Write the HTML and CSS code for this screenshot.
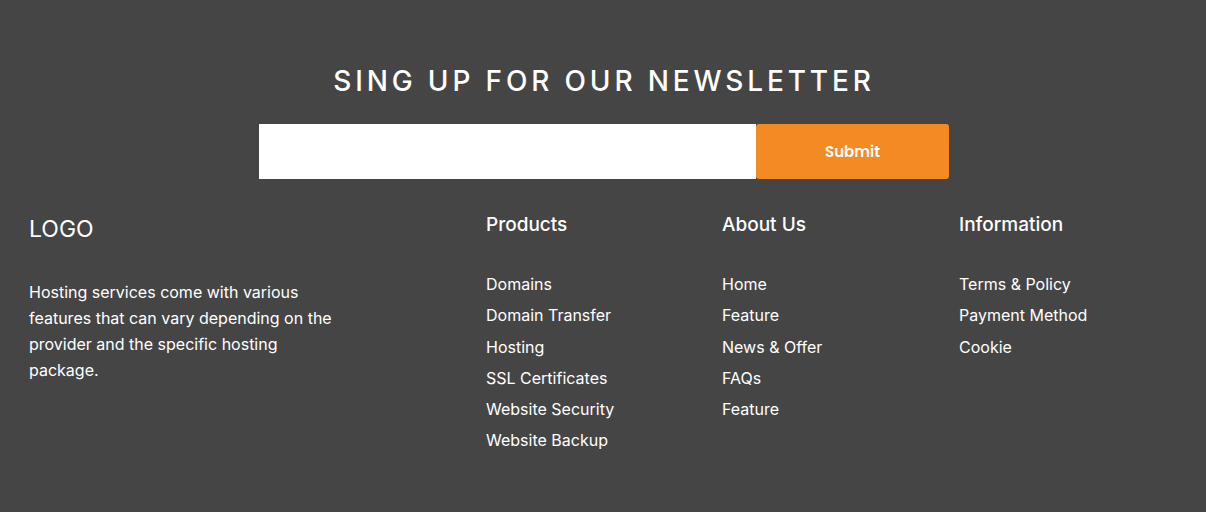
FILE: index.html
```html
<!DOCTYPE html>
<html lang="en">
<head>
<meta charset="utf-8">
<title>Footer</title>
<link rel="stylesheet" href="styles.css">
</head>
<body>
<footer class="footer">
  <section class="newsletter">
    <h2 class="newsletter-title">SING UP FOR OUR NEWSLETTER</h2>
    <form class="newsletter-form">
      <input class="newsletter-input" type="email" aria-label="Email">
      <button class="newsletter-button" type="button">Submit</button>
    </form>
  </section>
  <div class="footer-grid">
    <div class="brand">
      <div class="logo">LOGO</div>
      <p class="brand-text">Hosting services come with various features that can vary depending on the provider and the specific hosting package.</p>
    </div>
    <div class="col">
      <h3 class="col-title">Products</h3>
      <ul class="links">
        <li>Domains</li>
        <li>Domain Transfer</li>
        <li>Hosting</li>
        <li>SSL Certificates</li>
        <li>Website Security</li>
        <li>Website Backup</li>
      </ul>
    </div>
    <div class="col">
      <h3 class="col-title">About Us</h3>
      <ul class="links">
        <li>Home</li>
        <li>Feature</li>
        <li>News &amp; Offer</li>
        <li>FAQs</li>
        <li>Feature</li>
      </ul>
    </div>
    <div class="col">
      <h3 class="col-title">Information</h3>
      <ul class="links">
        <li>Terms &amp; Policy</li>
        <li>Payment Method</li>
        <li>Cookie</li>
      </ul>
    </div>
  </div>
</footer>
</body>
</html>
```

FILE: styles.css
```css
* { box-sizing: border-box; }
html, body { margin: 0; padding: 0; }
body {
  background: #454545;
  color: #ffffff;
  font-family: Inter, "Noto Sans", sans-serif;
}
.footer {
  height: 512px;
  padding: 64px 29px 0;
}
.newsletter {
  display: flex;
  flex-direction: column;
  align-items: center;
  padding-left: 2px;
}
.newsletter-title {
  margin: 0;
  font-size: 28px;
  font-weight: 500;
  letter-spacing: 3.85px;
  line-height: 34px;
}
.newsletter-form {
  display: flex;
  margin-top: 26px;
  width: 690px;
  height: 55px;
}
.newsletter-input {
  flex: 1;
  border: none;
  background: #ffffff;
  outline: none;
  margin: 0;
}
.newsletter-button {
  width: 193px;
  border: none;
  border-radius: 3px;
  background: #f38a23;
  color: #ffffff;
  font-family: Poppins, "Open Sans", sans-serif;
  font-size: 15px;
  font-weight: 600;
  margin: 0;
}
.footer-grid {
  display: grid;
  grid-template-columns: 441px 220px 221px 1fr;
  column-gap: 16px;
  margin-top: 34px;
}
.logo {
  font-size: 23px;
  line-height: 28px;
  margin-top: 2px;
}
.brand-text {
  margin: 36px 0 0;
  width: 315px;
  font-size: 16px;
  line-height: 26px;
}
.col-title {
  margin: 0;
  font-size: 19px;
  font-weight: 500;
  line-height: 24px;
}
.links {
  list-style: none;
  margin: 37px 0 0;
  padding: 0;
  font-size: 16px;
  line-height: 20px;
}
.links li { margin-bottom: 11.3px; }
```
